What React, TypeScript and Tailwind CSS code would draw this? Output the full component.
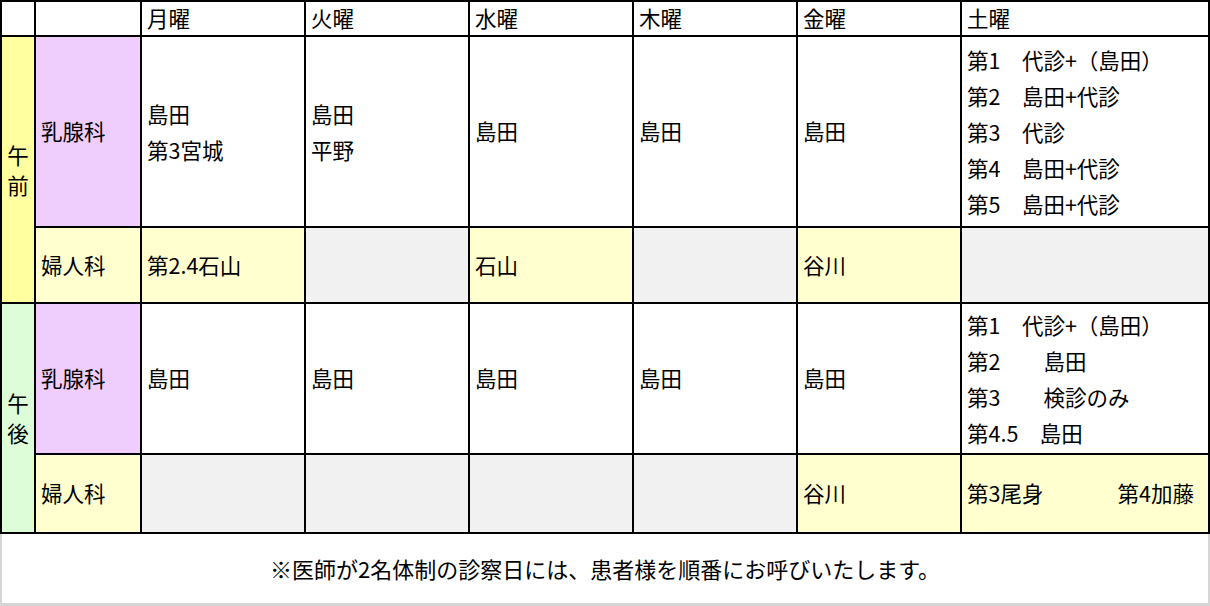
const cell = "flex items-center px-[5px] text-black";

function Lines({ items }: { items: string[] }) {
  return (
    <div className="flex flex-col leading-[36px] whitespace-pre">
      {items.map((t) => (
        <span key={t}>{t}</span>
      ))}
    </div>
  );
}

function Period({ label, color }: { label: string[]; color: string }) {
  return (
    <div className={`row-span-2 flex flex-col items-center justify-center leading-[30px] ${color}`}>
      {label.map((c) => (
        <span key={c}>{c}</span>
      ))}
    </div>
  );
}

export default function App() {
  const days = ["月曜", "火曜", "水曜", "木曜", "金曜", "土曜"];

  return (
    <div
      className="w-[1210px] h-[606px] bg-white text-[21.5px]"
      style={{ fontFamily: '"Noto Sans CJK JP", "Noto Sans", sans-serif' }}
    >
      <div className="grid grid-cols-[32px_104px_162px_162px_162px_162px_162px_246px] grid-rows-[33px_189px_74px_149px_77px] gap-[2px] p-[2px] bg-black">
        {/* header */}
        <div className="bg-white" />
        <div className="bg-white" />
        {days.map((d) => (
          <div key={d} className={`${cell} bg-white`}>
            {d}
          </div>
        ))}

        {/* 午前 乳腺科 */}
        <Period label={["午", "前"]} color="bg-[#ffff9f]" />
        <div className={`${cell} bg-[#efcdfc]`}>乳腺科</div>
        <div className={`${cell} bg-white`}>
          <Lines items={["島田", "第3宮城"]} />
        </div>
        <div className={`${cell} bg-white`}>
          <Lines items={["島田", "平野"]} />
        </div>
        <div className={`${cell} bg-white`}>島田</div>
        <div className={`${cell} bg-white`}>島田</div>
        <div className={`${cell} bg-white`}>島田</div>
        <div className={`${cell} bg-white`}>
          <Lines
            items={[
              "第1　代診+（島田）",
              "第2　島田+代診",
              "第3　代診",
              "第4　島田+代診",
              "第5　島田+代診",
            ]}
          />
        </div>

        {/* 午前 婦人科 */}
        <div className={`${cell} bg-[#ffffd0]`}>婦人科</div>
        <div className={`${cell} bg-[#ffffd0]`}>第2.4石山</div>
        <div className="bg-[#f1f1f1]" />
        <div className={`${cell} bg-[#ffffd0]`}>石山</div>
        <div className="bg-[#f1f1f1]" />
        <div className={`${cell} bg-[#ffffd0]`}>谷川</div>
        <div className="bg-[#f1f1f1]" />

        {/* 午後 乳腺科 */}
        <Period label={["午", "後"]} color="bg-[#dcfdd7]" />
        <div className={`${cell} bg-[#efcdfc]`}>乳腺科</div>
        <div className={`${cell} bg-white`}>島田</div>
        <div className={`${cell} bg-white`}>島田</div>
        <div className={`${cell} bg-white`}>島田</div>
        <div className={`${cell} bg-white`}>島田</div>
        <div className={`${cell} bg-white`}>島田</div>
        <div className={`${cell} bg-white`}>
          <Lines
            items={[
              "第1　代診+（島田）",
              "第2　　島田",
              "第3　　検診のみ",
              "第4.5　島田",
            ]}
          />
        </div>

        {/* 午後 婦人科 */}
        <div className={`${cell} bg-[#ffffd0]`}>婦人科</div>
        <div className="bg-[#f1f1f1]" />
        <div className="bg-[#f1f1f1]" />
        <div className="bg-[#f1f1f1]" />
        <div className="bg-[#f1f1f1]" />
        <div className={`${cell} bg-[#ffffd0]`}>谷川</div>
        <div className={`${cell} justify-between pr-[14px] bg-[#ffffd0]`}>
          <span>第3尾身</span>
          <span>第4加藤</span>
        </div>
      </div>

      <div className="h-[72px] flex items-center justify-center border-x-2 border-b-[3px] border-[#d6d6d6] text-black text-[22px]">
        ※医師が2名体制の診察日には、患者様を順番にお呼びいたします。
      </div>
    </div>
  );
}
